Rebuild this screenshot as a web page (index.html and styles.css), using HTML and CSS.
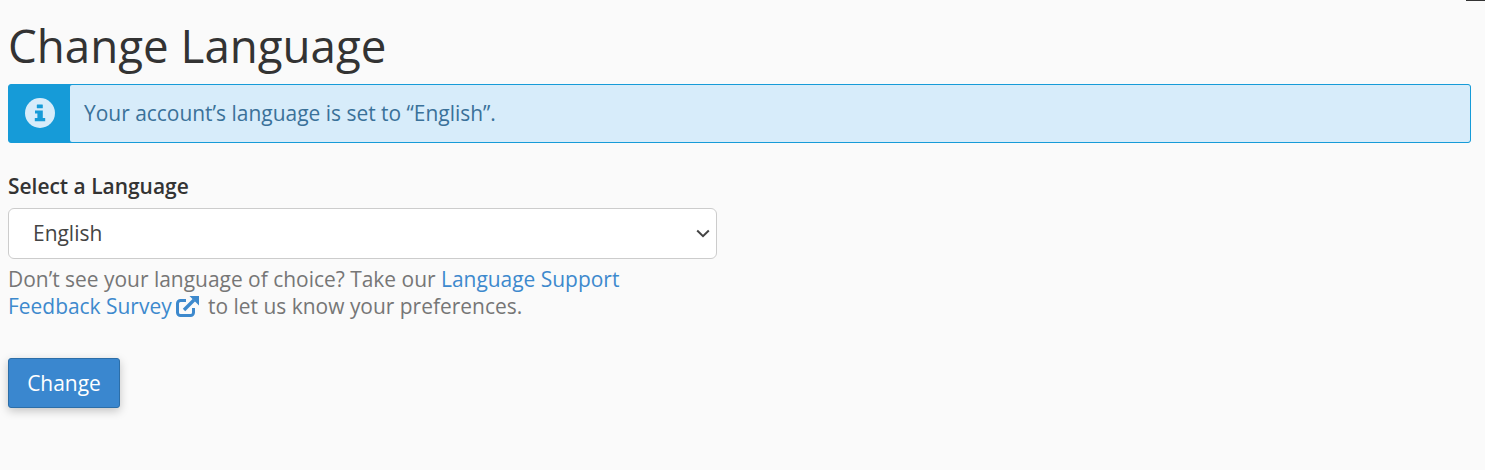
FILE: index.html
```html
<!DOCTYPE html>
<html lang="en">
<head>
<meta charset="utf-8">
<title>Change Language</title>
<link rel="stylesheet" href="styles.css">
</head>
<body>
<div class="corner-mark"></div>
<main class="page">
  <h1 class="title">Change Language</h1>
  <div class="alert">
    <div class="alert-icon">
      <svg class="info-icon" viewBox="0 0 30 30" width="30" height="30" aria-hidden="true">
        <circle cx="15" cy="15" r="15" fill="#d7ecfa"/>
        <rect x="11.800" y="6.400" width="6" height="3.800" rx="0.500" fill="#169bd8"/>
        <path d="M10 12.400h7.800v7.600h2.400v3.200H9.800V20H12.400v-4.400H10z" fill="#169bd8"/>
      </svg>
    </div>
    <div class="alert-text">Your account’s language is set to “English”.</div>
  </div>
  <form class="form">
    <label class="label" for="lang">Select a Language</label>
    <div class="select-wrap">
      <select class="select" id="lang">
        <option>English</option>
      </select>
      <svg class="chevron" viewBox="0 0 14 9" width="14" height="9" aria-hidden="true"><path d="M1.200 1.500 7 7.200l5.800-5.700" fill="none" stroke="#444" stroke-width="2"/></svg>
    </div>
    <p class="help">Don’t see your language of choice? Take our <a class="link" href="#">Language Support Feedback Survey<svg class="ext-icon" viewBox="0 0 23 22" width="23" height="22" aria-hidden="true"><path d="M10 5.500H4.500a3 3 0 0 0-3 3V17.500a3 3 0 0 0 3 3h10a3 3 0 0 0 3-3V13" fill="none" stroke="currentColor" stroke-width="3"/><path d="M8 15 18 5" fill="none" stroke="currentColor" stroke-width="3.400"/><path d="M13.500 1H23v9.500z" fill="currentColor"/></svg></a> to let us know your preferences.</p>
    <button class="button" type="button">Change</button>
  </form>
</main>
</body>
</html>
```

FILE: styles.css
```css
* {
  box-sizing: border-box;
}

html,
body {
  margin: 0;
  height: 100%;
}

body {
  background: #fafafa;
  color: #333;
  font-family: "Open Sans", "Noto Sans", sans-serif;
  font-size: 20.950px;
  overflow: hidden;
}

.corner-mark {
  position: absolute;
  top: 0;
  right: 0;
  width: 19px;
  height: 1px;
  background: #333;
}

.page {
  padding: 18px 14px 0 8px;
}

.title {
  margin: 0 0 11px;
  font-size: 45.700px;
  font-weight: 400;
  line-height: 55px;
  color: #333;
}

.alert {
  display: flex;
  height: 59px;
  border: 1px solid #169bd8;
  border-radius: 3px;
  background: #169bd8;
  overflow: hidden;
}

.alert-icon {
  display: flex;
  align-items: center;
  justify-content: center;
  flex: 0 0 61px;
  padding-bottom: 1px;
}

.alert-text {
  display: flex;
  flex: 1;
  align-items: center;
  padding: 0 0 2px 14px;
  border-radius: 2px 0 0 2px;
  background: #d7ecfa;
  color: #3a7199;
}

.form {
  display: flex;
  flex-direction: column;
  align-items: flex-start;
  margin-top: 28px;
}

.label {
  font-weight: 600;
  line-height: 30px;
  color: #333;
}

.select-wrap {
  position: relative;
  margin-top: 7px;
}

.select {
  display: block;
  width: 709px;
  height: 51px;
  padding: 0 24px 2px;
  border: 1px solid #ccc;
  border-radius: 6px;
  background: #fff;
  color: #444;
  font-family: inherit;
  font-size: 20.950px;
  appearance: none;
}

.chevron {
  position: absolute;
  top: 21px;
  right: 7px;
}

.help {
  width: 640px;
  margin: 7px 0 0;
  line-height: 27px;
  color: #767676;
}

.link {
  color: #3d89cd;
  text-decoration: none;
}

.ext-icon {
  margin-left: 4px;
  margin-right: 4px;
  vertical-align: -3px;
}

.button {
  width: 112px;
  height: 50px;
  margin-top: 38px;
  border: 1px solid #2c6ea8;
  border-radius: 3px;
  background: #3a87cf;
  color: #fff;
  font-family: inherit;
  font-size: 20.950px;
  box-shadow: 0 3px 10px rgba(0, 0, 0, 0.22);
}
```
